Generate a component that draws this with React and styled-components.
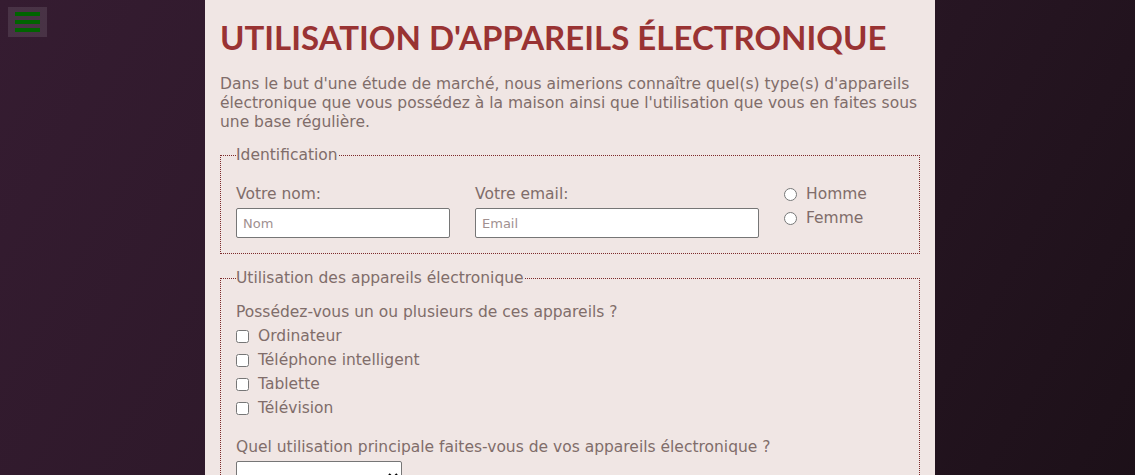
import React from "react";
import styled, { createGlobalStyle } from "styled-components";

const GlobalStyle = createGlobalStyle`
  html, body {
    margin: 0;
    padding: 0;
  }
  body {
    background: linear-gradient(120deg, #351c31 0%, #2a1726 55%, #1c1018 100%);
    min-height: 100vh;
    font-family: "DejaVu Sans", "Open Sans", sans-serif;
  }
`;

const Page = styled.div`
  min-height: 100vh;
  display: flex;
`;

const MenuButton = styled.button`
  position: fixed;
  top: 7px;
  left: 8px;
  width: 39px;
  height: 30px;
  padding: 0;
  border: none;
  background: rgba(255, 255, 255, 0.1);
  display: flex;
  flex-direction: column;
  align-items: center;
  justify-content: center;
  gap: 4px;
  cursor: pointer;
`;

const Bar = styled.span`
  display: block;
  width: 25px;
  height: 4px;
  background: #006400;
`;

const Main = styled.main`
  width: 730px;
  margin-left: 205px;
  box-sizing: border-box;
  padding: 19px 15px 0;
  background: #f0e6e4;
  color: #806d6a;
`;

const Title = styled.h1`
  margin: 0 0 20px;
  font-family: "Lato", sans-serif;
  font-weight: 700;
  font-size: 33px;
  line-height: 36px;
  color: #993333;
`;

const Intro = styled.p`
  margin: 0 0 14px;
  font-size: 15.5px;
  line-height: 19px;
`;

const Fieldset = styled.fieldset`
  margin: 0 0 15px;
  padding: ${(p) => p.$top}px 15px 15px;
  border: 1px dotted #7d2a2a;
`;

const Legend = styled.legend`
  padding: 0;
  font-size: 15.5px;
  line-height: 19px;
`;

const IdRow = styled.div`
  display: flex;
  align-items: flex-start;
  gap: 25px;
`;

const Field = styled.div`
  display: flex;
  flex-direction: column;
  gap: 4px;
  width: ${(p) => p.$w}px;
`;

const Label = styled.label`
  font-size: 15.5px;
  line-height: 19px;
`;

const Input = styled.input`
  box-sizing: border-box;
  width: 100%;
  height: 30px;
  border: 1px solid #767676;
  border-radius: 2px;
  background: #fff;
  padding: 0 6px;
  font-family: inherit;
  font-size: 13px;
  &::placeholder {
    color: #a09090;
  }
`;

const Choices = styled.div`
  display: flex;
  flex-direction: column;
  margin-top: -3px;
`;

const Choice = styled.label`
  display: flex;
  align-items: center;
  gap: 9px;
  font-size: 15.5px;
  line-height: 24px;
  input {
    margin: 0;
    width: 13px;
    height: 13px;
  }
`;

const Question = styled.p`
  margin: 0 0 2px;
  font-size: 15.5px;
  line-height: 19px;
`;

const CheckList = styled.div`
  display: flex;
  flex-direction: column;
  margin-bottom: 18px;
`;

const Select = styled.select`
  margin-top: 2px;
  width: 166px;
  height: 30px;
  border: 1px solid #767676;
  border-radius: 2px;
  background: #fff;
`;

const devices = ["Ordinateur", "Téléphone intelligent", "Tablette", "Télévision"];

export default function App() {
  return (
    <>
      <GlobalStyle />
      <MenuButton aria-label="menu">
        <Bar />
        <Bar />
        <Bar />
      </MenuButton>
      <Page>
        <Main>
          <Title>UTILISATION D'APPAREILS ÉLECTRONIQUE</Title>
          <Intro>
            Dans le but d'une étude de marché, nous aimerions connaître quel(s) type(s) d'appareils
            électronique que vous possédez à la maison ainsi que l'utilisation que vous en faites sous
            une base régulière.
          </Intro>
          <Fieldset $top={20}>
            <Legend>Identification</Legend>
            <IdRow>
              <Field $w={214}>
                <Label htmlFor="nom">Votre nom:</Label>
                <Input id="nom" placeholder="Nom" />
              </Field>
              <Field $w={284}>
                <Label htmlFor="email">Votre email:</Label>
                <Input id="email" placeholder="Email" />
              </Field>
              <Choices>
                <Choice>
                  <input type="radio" name="sexe" /> Homme
                </Choice>
                <Choice>
                  <input type="radio" name="sexe" /> Femme
                </Choice>
              </Choices>
            </IdRow>
          </Fieldset>
          <Fieldset $top={15}>
            <Legend>Utilisation des appareils électronique</Legend>
            <Question>Possédez-vous un ou plusieurs de ces appareils ?</Question>
            <CheckList>
              {devices.map((d) => (
                <Choice key={d}>
                  <input type="checkbox" /> {d}
                </Choice>
              ))}
            </CheckList>
            <Question>Quel utilisation principale faites-vous de vos appareils électronique ?</Question>
            <Select />
          </Fieldset>
        </Main>
      </Page>
    </>
  );
}
